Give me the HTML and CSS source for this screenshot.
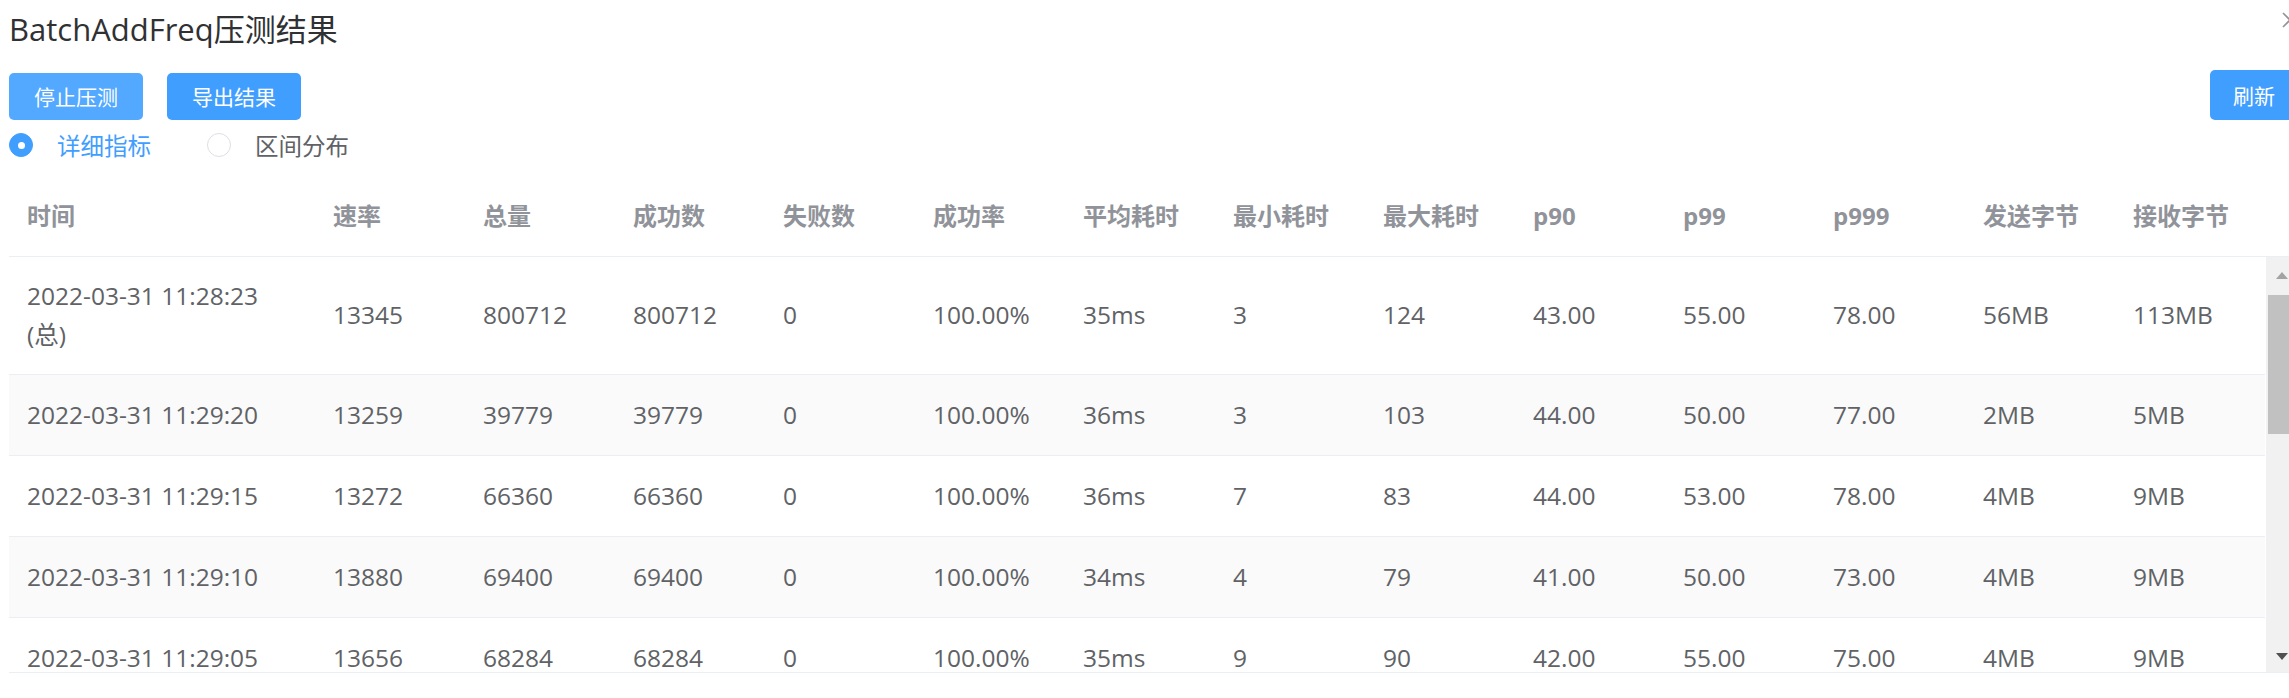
FILE: index.html
```html
<!DOCTYPE html>
<html lang="zh-CN">
<head>
<meta charset="utf-8">
<title>BatchAddFreq压测结果</title>
<link rel="stylesheet" href="styles.css">
</head>
<body>
<div class="viewport">
  <div class="dialog">
    <div class="dialog-header">
      <span class="title">BatchAddFreq压测结果</span>
      <svg class="close" viewBox="0 0 16 16" width="16" height="16"><path d="M1 1 L15 15 M15 1 L1 15" stroke="#909399" stroke-width="1.6" fill="none"/></svg>
    </div>
    <div class="toolbar">
      <div class="btn-group">
        <button class="btn btn-light">停止压测</button>
        <button class="btn">导出结果</button>
      </div>
      <button class="btn btn-refresh">刷新</button>
    </div>
    <div class="radio-group">
      <label class="radio checked"><span class="radio-dot"></span><span class="radio-label">详细指标</span></label>
      <label class="radio"><span class="radio-dot"></span><span class="radio-label">区间分布</span></label>
    </div>
    <div class="table">
      <table class="head">
        <colgroup><col class="c-first"><col class="c"><col class="c"><col class="c"><col class="c"><col class="c"><col class="c"><col class="c"><col class="c"><col class="c"><col class="c"><col class="c"><col class="c"><col class="c"><col class="c-gutter"></colgroup>
        <tr>
          <th>时间</th><th>速率</th><th>总量</th><th>成功数</th><th>失败数</th><th>成功率</th><th>平均耗时</th><th>最小耗时</th><th>最大耗时</th><th>p90</th><th>p99</th><th>p999</th><th>发送字节</th><th>接收字节</th><th></th>
        </tr>
      </table>
      <div class="table-body">
        <div class="body-scroll">
          <table class="body">
            <colgroup><col class="c-first"><col class="c"><col class="c"><col class="c"><col class="c"><col class="c"><col class="c"><col class="c"><col class="c"><col class="c"><col class="c"><col class="c"><col class="c"><col class="c"></colgroup>
            <tr class="total">
              <td>2022-03-31 11:28:23 (总)</td><td>13345</td><td>800712</td><td>800712</td><td>0</td><td>100.00%</td><td>35ms</td><td>3</td><td>124</td><td>43.00</td><td>55.00</td><td>78.00</td><td>56MB</td><td>113MB</td>
            </tr>
            <tr class="stripe">
              <td>2022-03-31 11:29:20</td><td>13259</td><td>39779</td><td>39779</td><td>0</td><td>100.00%</td><td>36ms</td><td>3</td><td>103</td><td>44.00</td><td>50.00</td><td>77.00</td><td>2MB</td><td>5MB</td>
            </tr>
            <tr>
              <td>2022-03-31 11:29:15</td><td>13272</td><td>66360</td><td>66360</td><td>0</td><td>100.00%</td><td>36ms</td><td>7</td><td>83</td><td>44.00</td><td>53.00</td><td>78.00</td><td>4MB</td><td>9MB</td>
            </tr>
            <tr class="stripe">
              <td>2022-03-31 11:29:10</td><td>13880</td><td>69400</td><td>69400</td><td>0</td><td>100.00%</td><td>34ms</td><td>4</td><td>79</td><td>41.00</td><td>50.00</td><td>73.00</td><td>4MB</td><td>9MB</td>
            </tr>
            <tr>
              <td>2022-03-31 11:29:05</td><td>13656</td><td>68284</td><td>68284</td><td>0</td><td>100.00%</td><td>35ms</td><td>9</td><td>90</td><td>42.00</td><td>55.00</td><td>75.00</td><td>4MB</td><td>9MB</td>
            </tr>
          </table>
        </div>
        <div class="scrollbar">
          <div class="sb-btn"><span class="arrow-up"></span></div>
          <div class="sb-thumb"></div>
          <div class="sb-space"></div>
          <div class="sb-btn sb-btn-down"><span class="arrow-down"></span></div>
        </div>
      </div>
    </div>
  </div>
</div>
</body>
</html>
```
FILE: styles.css
```css
html, body {
  margin: 0;
  padding: 0;
  background: #ffffff;
  overflow: hidden;
}
.viewport {
  width: 2289px;
  height: 698px;
  overflow: hidden;
  font-family: "Open Sans", "Noto Sans CJK SC", sans-serif;
  color: #606266;
}
.dialog {
  width: 2289px;
  padding-left: 9px;
}
.dialog-header {
  display: flex;
  justify-content: space-between;
  align-items: flex-start;
  padding-top: 8px;
}
.title {
  font-size: 31px;
  line-height: 42px;
  color: #303133;
  font-family: "Open Sans", "Noto Sans CJK SC", sans-serif;
}
.close {
  margin-top: 4px;
  display: block;
}
.toolbar {
  display: flex;
  justify-content: space-between;
  align-items: flex-end;
  margin-top: 20px;
}
.btn-group {
  display: flex;
  gap: 24px;
}
.btn {
  height: 47px;
  padding: 0 25px;
  border: none;
  border-radius: 5px;
  background: #409eff;
  color: #ffffff;
  font-family: "Noto Sans CJK SC", sans-serif;
  font-size: 21px;
  line-height: 47px;
  cursor: pointer;
}
.btn-light {
  background: #53a8ff;
}
.btn-refresh {
  height: 50px;
  line-height: 50px;
  padding: 0 23px;
}
.radio-group {
  display: flex;
  align-items: center;
  margin-top: 13px;
  height: 24px;
}
.radio {
  display: flex;
  align-items: center;
  gap: 24px;
  margin-right: 56px;
}
.radio-dot {
  width: 24px;
  height: 24px;
  border-radius: 50%;
  box-sizing: border-box;
  border: 1px solid #dcdfe6;
  background: #ffffff;
  display: flex;
  align-items: center;
  justify-content: center;
}
.radio.checked .radio-dot {
  border-color: #409eff;
  background: #409eff;
}
.radio.checked .radio-dot::after {
  content: "";
  width: 7px;
  height: 7px;
  border-radius: 50%;
  background: #ffffff;
}
.radio-label {
  font-family: "Noto Sans CJK SC", sans-serif;
  font-size: 23.5px;
  line-height: 24px;
  color: #606266;
}
.radio.checked .radio-label {
  color: #409eff;
}
.table {
  margin-top: 19px;
}
table {
  border-collapse: collapse;
  table-layout: fixed;
}
.head {
  width: 2288px;
}
.body {
  width: 2256px;
}
col.c-first { width: 306px; }
col.c { width: 150px; }
col.c-gutter { width: 32px; }
th, td {
  padding: 20px 18px;
  line-height: 40px;
  text-align: left;
  vertical-align: middle;
  border-bottom: 1px solid #ebeef5;
  font-size: 24.5px;
  white-space: normal;
}
th {
  color: #909399;
  font-weight: bold;
  font-size: 24px;
  background: #ffffff;
}
td {
  color: #606266;
}
tr.total td {
  line-height: 38.5px;
}
tr.stripe td {
  background: #fafafa;
}
.table-body {
  display: flex;
  height: 415px;
  border-bottom: 1px solid #ebeef5;
}
.body-scroll {
  width: 2257px;
  flex: none;
  overflow: hidden;
}
.scrollbar {
  width: 32px;
  flex: none;
  background: #f1f1f1;
  display: flex;
  flex-direction: column;
  align-items: center;
}
.sb-btn {
  height: 36px;
  width: 100%;
  display: flex;
  align-items: center;
  justify-content: center;
}
.sb-btn-down {
  height: 32px;
}
.arrow-up {
  width: 0;
  height: 0;
  border-left: 6px solid transparent;
  border-right: 6px solid transparent;
  border-bottom: 7px solid #a3a3a3;
}
.arrow-down {
  width: 0;
  height: 0;
  border-left: 6px solid transparent;
  border-right: 6px solid transparent;
  border-top: 7px solid #505050;
}
.sb-thumb {
  margin-top: 2px;
  width: 28px;
  height: 139px;
  background: #c1c1c1;
}
.sb-space {
  flex: 1;
}
```
